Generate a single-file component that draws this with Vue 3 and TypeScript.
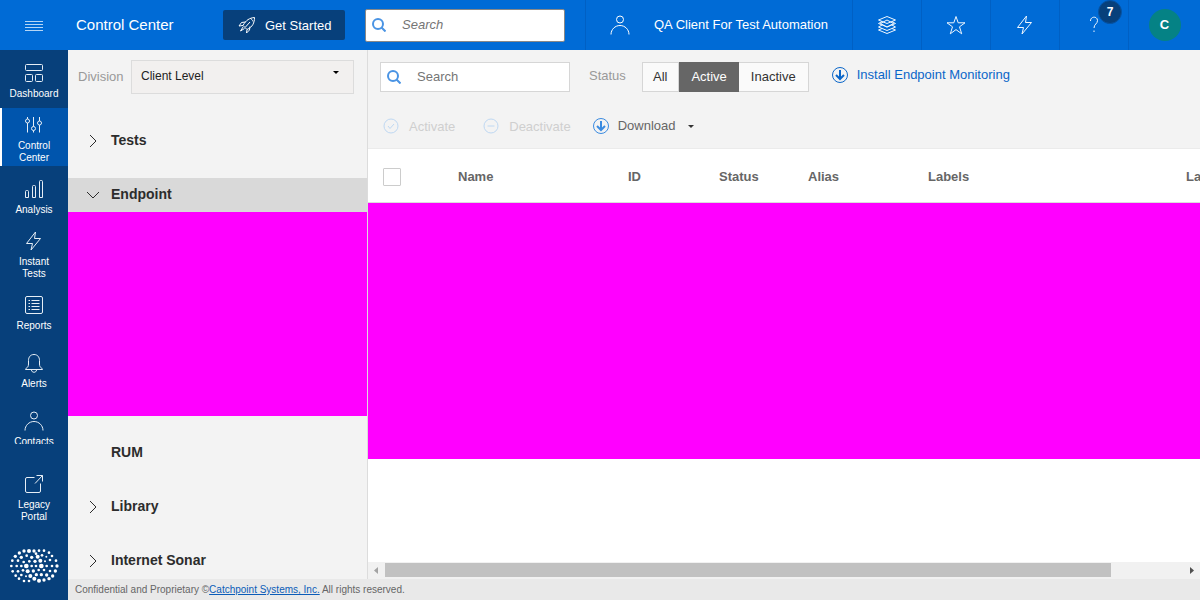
<script setup lang="ts">
import { ref } from 'vue'

interface NavItem { label: string; icon: string; active?: boolean }
interface Section { label: string; kind: 'closed' | 'open' | 'leaf' }
interface Column { label: string; cls: string }

const navItems: NavItem[] = [
  { label: 'Dashboard', icon: 'dashboard' },
  { label: 'Control Center', icon: 'control', active: true },
  { label: 'Analysis', icon: 'analysis' },
  { label: 'Instant Tests', icon: 'bolt' },
  { label: 'Reports', icon: 'reports' },
  { label: 'Alerts', icon: 'bell' },
  { label: 'Contacts', icon: 'person' },
]

const icons: Record<string, string[]> = {
  dashboard: ['M2.5 1.5h15a1 1 0 0 1 1 1v4a1 1 0 0 1-1 1h-15a1 1 0 0 1-1-1v-4a1 1 0 0 1 1-1z', 'M2.5 11.5h5a1 1 0 0 1 1 1v5a1 1 0 0 1-1 1h-5a1 1 0 0 1-1-1v-5a1 1 0 0 1 1-1z', 'M12.5 11.5h5a1 1 0 0 1 1 1v5a1 1 0 0 1-1 1h-5a1 1 0 0 1-1-1v-5a1 1 0 0 1 1-1z'],
  control: ['M3.5 2v2M3.5 8v9.500M9.500 2v9.500M9.500 15.500v2M15.500 2v4M15.500 10v7.500', 'M1.500 6a2 2 0 1 0 4 0a2 2 0 1 0-4 0', 'M7.500 13.500a2 2 0 1 0 4 0a2 2 0 1 0-4 0', 'M13.500 8a2 2 0 1 0 4 0a2 2 0 1 0-4 0'],
  analysis: ['M2.500 11.500h1a1 1 0 0 1 1 1v6h-3v-6a1 1 0 0 1 1-1z', 'M9.500 6.500h1a1 1 0 0 1 1 1v11h-3v-11a1 1 0 0 1 1-1z', 'M16.500 1.500h1a1 1 0 0 1 1 1v16h-3v-16a1 1 0 0 1 1-1z'],
  bolt: ['M11.500 1L2.500 12.500H8.500L7 19L16.500 7.500H10.500L11.500 1z'],
  reports: ['M3 1.500h14a1.500 1.500 0 0 1 1.500 1.500v14a1.500 1.500 0 0 1-1.500 1.500h-14a1.500 1.500 0 0 1-1.500-1.500v-14a1.500 1.500 0 0 1 1.500-1.500z', 'M4.500 5.500h1.500M7.500 5.500h8M4.500 8.500h1.500M7.500 8.500h8M4.500 11.500h1.500M7.500 11.500h8M4.500 14.500h1.500M7.500 14.500h8'],
  bell: ['M1.500 16.500c0-2 3-1 3-5.500V7.500C4.500 4 6.500 1.500 10 1.500s5.500 2.500 5.500 6V11c0 4.500 3 3.500 3 5.500z', 'M7.500 17c0 3 5 3 5 0'],
  person: ['M6.500 4.500a3.500 3.500 0 1 0 7 0a3.500 3.500 0 1 0-7 0', 'M1 19.500c0-5 4-9 9-9s9 4 9 9'],
}

const sections: Section[] = [
  { label: 'Tests', kind: 'closed' },
  { label: 'Endpoint', kind: 'open' },
  { label: 'RUM', kind: 'leaf' },
  { label: 'Library', kind: 'closed' },
  { label: 'Internet Sonar', kind: 'closed' },
]

const columns: Column[] = [
  { label: 'Name', cls: 'c-name' },
  { label: 'ID', cls: 'c-id' },
  { label: 'Status', cls: 'c-status' },
  { label: 'Alias', cls: 'c-alias' },
  { label: 'Labels', cls: 'c-labels' },
  { label: 'Last', cls: 'c-last' },
]

const statuses = ['All', 'Active', 'Inactive']
const status = ref('Active')

const dots: number[][] = [
  [54, 21, 5], [69, 21, 6], [84, 21, 5], [99, 20, 4], [114, 20, 4],
  [40, 27, 5], [129, 26, 4], [28, 37, 5], [46, 40, 5], [62, 35, 4], [77, 40, 5], [90, 29, 4], [95, 38, 6], [108, 34, 4], [121, 38, 3], [138, 36, 4],
  [19, 50, 4], [36, 50, 4], [53, 54, 4], [70, 52, 4], [87, 52, 5], [103, 50, 6], [117, 52, 3], [132, 48, 4], [150, 50, 4],
  [16, 66, 4], [32, 66, 4], [46, 66, 4], [61, 66, 7], [77, 66, 4], [90, 66, 4], [106, 66, 7], [122, 66, 4], [138, 66, 4], [153, 66, 5],
  [20, 82, 4], [36, 82, 4], [51, 79, 4], [65, 82, 6], [82, 81, 5], [98, 78, 4], [114, 78, 4], [132, 81, 4], [148, 81, 5],
  [29, 95, 4], [46, 93, 4], [60, 97, 3], [73, 96, 6], [91, 92, 5], [106, 92, 5], [122, 93, 5], [140, 96, 5],
  [39, 104, 4], [85, 104, 6], [129, 104, 5], [54, 111, 4], [69, 111, 4], [99, 110, 6], [114, 108, 5],
]
</script>

<template>
  <div class="app">
    <header class="topbar">
      <button class="menu" aria-label="Menu">
        <svg width="18" height="12" viewBox="0 0 18 12"><path d="M0 1.500h18M0 4.500h18M0 7.500h18M0 10.500h18" /></svg>
      </button>
      <h1 class="title">Control Center</h1>
      <button class="started">
        <svg width="18" height="18" viewBox="0 0 18 18">
          <path d="M16.500 1.500C11.500 2 8 4 5 9.500l4 4C14.500 11 16.500 7 16.500 1.500zM7.500 6L3.500 6.500 1 10l4-.5M12 10.500l-.5 3.500-3 3 .5-3.500M5 11l-2.500 4 4-2.500M12.500 2.500c1 .5 2 1.500 2.500 3M7.500 11l4.500-5" />
        </svg>
        <span>Get Started</span>
      </button>
      <label class="search top-search">
        <svg width="14" height="14" viewBox="0 0 14 14"><circle cx="6" cy="6" r="5" /><path d="M9.500 9.500L13.500 13.500" /></svg>
        <input type="text" placeholder="Search" aria-label="Search all" />
      </label>
      <button class="client">
        <svg width="20" height="20" viewBox="0 0 20 20"><path v-for="d in icons.person" :key="d" :d="d" /></svg>
        <span>QA Client For Test Automation</span>
      </button>
      <button class="tool" aria-label="Layers">
        <svg width="20" height="20" viewBox="0 0 20 20">
          <path d="M10 1.500l8.500 3.500-8.500 3.500L1.500 5zM5 6.500L1.500 8.500l8.500 3.500 8.500-3.500-3.500-2M5 10L1.500 12l8.500 3.500 8.500-3.500-3.500-2M5 13.500l-3.500 1.500 8.500 3.500 8.500-3.500-3.500-1.500M10 5l6.500 3.500-6.500 3.500-6.500-3.500z" />
        </svg>
      </button>
      <button class="tool" aria-label="Favorites">
        <svg width="20" height="20" viewBox="0 0 20 20"><path d="M10 1.500l2.200 6.300h6.800l-5.500 4 2.200 7-5.700-4.200-5.700 4.200 2.200-7-5.500-4h6.800z" /></svg>
      </button>
      <button class="tool" aria-label="Instant tests">
        <svg width="20" height="20" viewBox="0 0 20 20"><path v-for="d in icons.bolt" :key="d" :d="d" /></svg>
      </button>
      <button class="tool" aria-label="Help">
        <svg width="20" height="20" viewBox="0 0 20 20"><path d="M6.500 6c0-5 7-5 7-.5 0 3.500-3.500 3.500-3.500 7.500M10 15.500v1.500" /></svg>
        <span class="badge">7</span>
      </button>
      <button class="account" aria-label="Account"><span class="avatar">C</span></button>
    </header>

    <div class="body">
      <aside class="rail">
        <nav class="rail-nav">
          <a v-for="n in navItems" :key="n.label" href="#" class="rail-item" :class="{ active: n.active }">
            <svg width="20" height="20" viewBox="0 0 20 20"><path v-for="d in icons[n.icon]" :key="d" :d="d" /></svg>
            <span>{{ n.label }}</span>
          </a>
        </nav>
        <div class="rail-foot">
          <a href="#" class="rail-item">
            <svg width="20" height="20" viewBox="0 0 20 20"><path d="M10.500 3.500H3A1.500 1.500 0 0 0 1.500 5v12A1.500 1.500 0 0 0 3 18.500h12a1.500 1.500 0 0 0 1.500-1.500V9.500M12.500 1.500h6v6M18.500 1.500l-7.500 8" /></svg>
            <span>Legacy Portal</span>
          </a>
          <svg class="logo" width="56" height="48" viewBox="0 0 168 144">
            <circle v-for="(d, i) in dots" :key="i" :cx="d[0]" :cy="d[1]" :r="d[2]" />
          </svg>
        </div>
      </aside>

      <div class="content">
        <div class="panes">
          <section class="tree">
            <div class="division">
              <label for="division">Division</label>
              <div class="select">
                <select id="division"><option>Client Level</option></select>
                <span class="caret"></span>
              </div>
            </div>
            <div class="sections">
              <template v-for="s in sections" :key="s.label">
                <button class="section" :class="s.kind">
                  <span class="chev">
                    <svg v-if="s.kind === 'closed'" width="14" height="14" viewBox="0 0 14 14"><path d="M4 1l6 6-6 6" /></svg>
                    <svg v-else-if="s.kind === 'open'" width="14" height="14" viewBox="0 0 14 14"><path d="M1 4l6 6 6-6" /></svg>
                  </span>
                  <span>{{ s.label }}</span>
                </button>
                <div v-if="s.kind === 'open'" class="subtree"></div>
              </template>
            </div>
          </section>

          <main class="main">
            <div class="toolbar">
              <div class="filters">
                <label class="search list-search">
                  <svg width="14" height="14" viewBox="0 0 14 14"><circle cx="6" cy="6" r="5" /><path d="M9.500 9.500L13.500 13.500" /></svg>
                  <input type="text" placeholder="Search" aria-label="Search list" />
                </label>
                <span class="status-label">Status</span>
                <div class="segments" role="group" aria-label="Status">
                  <button v-for="s in statuses" :key="s" :class="{ on: s === status }" @click="status = s">{{ s }}</button>
                </div>
                <a class="install" href="#">
                  <svg width="18" height="18" viewBox="0 0 18 18"><circle cx="9" cy="9" r="7.500" /><path class="arrow" d="M9 4v9M5 9l4 4 4-4" /></svg>
                  <span>Install Endpoint Monitoring</span>
                </a>
              </div>
              <div class="actions">
                <button class="action" disabled>
                  <svg width="16" height="16" viewBox="0 0 16 16"><circle cx="8" cy="8" r="7" /><path d="M5 8l2 2.500L11 6" /></svg>
                  <span>Activate</span>
                </button>
                <button class="action" disabled>
                  <svg width="16" height="16" viewBox="0 0 16 16"><circle cx="8" cy="8" r="7" /><path d="M4.500 8h7" /></svg>
                  <span>Deactivate</span>
                </button>
                <button class="action download">
                  <svg width="18" height="18" viewBox="0 0 18 18"><circle cx="9" cy="9" r="7.500" /><path class="arrow" d="M9 4v9M5 9l4 4 4-4" /></svg>
                  <span>Download</span>
                  <span class="caret"></span>
                </button>
              </div>
            </div>
            <div class="grid">
              <table>
                <thead>
                  <tr>
                    <th class="c-check"><input type="checkbox" aria-label="Select all" /></th>
                    <th v-for="c in columns" :key="c.label" :class="c.cls">{{ c.label }}</th>
                  </tr>
                </thead>
                <tbody><tr><td colspan="7" class="rows"></td></tr></tbody>
              </table>
            </div>
            <div class="hscroll">
              <svg width="17" height="17" viewBox="0 0 17 17"><path d="M10 5v7L6 8.500z" fill="#a3a3a3" /></svg>
              <div class="track"><div class="thumb"></div></div>
              <svg width="17" height="17" viewBox="0 0 17 17"><path d="M7 5v7l4-3.500z" fill="#505050" /></svg>
            </div>
          </main>
        </div>
        <footer class="footer">
          Confidential and Proprietary ©<a href="#">Catchpoint Systems, Inc.</a> All rights reserved.
        </footer>
      </div>
    </div>
  </div>
</template>

<style>
body { overflow: hidden; }
</style>

<style scoped>
.app, .app * { box-sizing: border-box; }
.app {
  display: flex;
  flex-direction: column;
  height: 100vh;
  font-family: "Liberation Sans", Arial, sans-serif;
  font-size: 13px;
  background: #fff;
}
button, input, select { font: inherit; margin: 0; }
button { border: 0; background: none; padding: 0; cursor: pointer; }
svg { fill: none; stroke: currentColor; flex: none; display: block; }

.topbar {
  display: flex;
  align-items: stretch;
  flex: none;
  height: 50px;
  background: #006bd6;
  color: #fff;
}
.menu { width: 68px; display: flex; align-items: center; justify-content: center; padding-top: 2px; color: #b5d6f6; }
.title { width: 155px; margin: 0; padding-left: 8px; font-size: 15px; font-weight: 400; line-height: 50px; white-space: nowrap; }
.started {
  width: 122px;
  height: 30px;
  margin: 10px 20px 0 0;
  padding-left: 15px;
  display: flex;
  align-items: center;
  gap: 9px;
  border-radius: 2px;
  background: #07407b;
  color: #fff;
  white-space: nowrap;
}
.search { display: flex; align-items: center; background: #fff; color: #4a94e4; }
.search svg { stroke-width: 2; }
.search input { flex: 1; min-width: 0; border: 0; outline: 0; background: none; color: #444; }
.search input::placeholder { color: #757575; opacity: 1; }
.top-search { width: 200px; height: 33px; margin-top: 9px; padding: 0 0 2px 6px; gap: 14px; border: 1px solid #888; border-radius: 2px; }
.top-search input { font-style: italic; padding: 0 2px 1px; }
.client {
  flex: 1;
  margin-left: 20px;
  padding-left: 24px;
  display: flex;
  align-items: center;
  gap: 24px;
  border-left: 1px solid #0060c4;
  color: #fff;
  white-space: nowrap;
}
.client span { padding-bottom: 1px; }
.tool { position: relative; width: 69px; display: flex; align-items: center; justify-content: center; border-left: 1px solid #0060c4; color: #f0f7fe; }
.badge {
  position: absolute;
  top: 0;
  right: 6px;
  width: 24px;
  height: 24px;
  border-radius: 50%;
  background: #07407b;
  border: 1px solid #0553a5;
  color: #fff;
  font-size: 12px;
  font-weight: 700;
  line-height: 22px;
}
.account { width: 72px; border-left: 1px solid #0060c4; display: flex; align-items: center; justify-content: center; }
.avatar { width: 32px; height: 32px; border-radius: 50%; background: #058285; color: #fff; font-weight: 700; line-height: 32px; }

.body { flex: 1; display: flex; min-height: 0; }
.rail { width: 68px; flex: none; display: flex; flex-direction: column; background: #07407b; }
.rail-nav { flex: 1; min-height: 0; overflow: hidden; }
.rail-item {
  height: 58px;
  padding: 5px 8px 0;
  display: flex;
  flex-direction: column;
  align-items: center;
  justify-content: center;
  gap: 5px;
  color: #fff;
  font-size: 10px;
  line-height: 12px;
  text-align: center;
  text-decoration: none;
}
.rail-item svg { color: #e6eef6; }
.rail-item.active { background: #0055ad; box-shadow: inset 2px 0 #fff; }
.rail-foot { flex: none; padding: 23px 0 8px; }
.logo { margin: 19px 6px 0; }
.logo circle { fill: #fff; stroke: none; }

.content { flex: 1; min-width: 0; display: flex; flex-direction: column; }
.panes { flex: 1; display: flex; min-height: 0; }
.tree { width: 300px; flex: none; background: #f3f3f3; border-right: 1px solid #dcdcdc; overflow: hidden; }
.division { height: 74px; padding: 10px 13px 0 10px; display: flex; align-items: flex-start; gap: 8px; }
.division label { width: 45px; color: #999; line-height: 33px; }
.select { position: relative; flex: 1; }
.select select {
  display: block;
  width: 100%;
  height: 34px;
  padding: 0 9px 3px;
  appearance: none;
  border: 1px solid #dcdcdc;
  border-radius: 0;
  background: #f2f0ef;
  color: #222;
  font-size: 12px;
}
.caret { border: 3px solid transparent; border-top-color: currentColor; border-bottom: 0; }
.select .caret { position: absolute; top: 11px; right: 15px; pointer-events: none; color: #000; }
.section { width: 100%; height: 34px; padding: 0 0 2px 18px; display: flex; align-items: center; gap: 11px; color: #2c2c2c; font-size: 14px; font-weight: 700; }
.section + .section, .subtree + .section { margin-top: 20px; }
.section.open { background: #d9d9d9; }
.chev { width: 14px; height: 14px; padding-top: 1px; }
.subtree { height: 204px; background: #f0f; }

.main { flex: 1; min-width: 0; display: flex; flex-direction: column; background: #fff; }
.toolbar { flex: none; height: 99px; padding: 12px 12px 0; background: #f3f3f3; border-bottom: 1px solid #ebebeb; }
.filters { display: flex; height: 30px; white-space: nowrap; }
.list-search { width: 190px; padding-left: 6px; gap: 13px; border: 1px solid #d6d6d6; }
.list-search input { padding: 0 3px 2px; }
.status-label { width: 53px; margin-left: 19px; color: #999; line-height: 28px; }
.segments { display: flex; margin-right: 22px; }
.segments button { padding: 0 12px 2px; border: 1px solid #d6d6d6; background: #fafafa; color: #333; }
.segments button:first-child { padding: 0 11px 2px 10px; }
.segments button + button { border-left: 0; }
.segments button.on { padding: 0 11px 2px 12px; border-color: #666; background: #666; color: #fff; }
.install { display: flex; gap: 8px; color: #0a66c9; text-decoration: none; line-height: 26px; }
.install svg { margin-top: 4px; }
.arrow { stroke-width: 2; }
.actions { display: flex; align-items: center; height: 24px; margin-top: 22px; padding-left: 3px; }
.action { display: flex; align-items: center; gap: 10px; margin-right: 28px; color: #cfcfcf; }
.action svg { color: #bfd8f2; }
.download { gap: 8px; margin-left: -7px; color: #666; }
.download svg { color: #3b8be0; }
.download span { padding-bottom: 2px; }
.download .caret { padding: 0; margin-left: 4px; color: #333; }
.grid { flex: 1; min-height: 0; overflow: hidden; }
table { width: 968px; table-layout: fixed; border-collapse: separate; border-spacing: 0; }
th { height: 54px; padding: 2px 0 0; border-bottom: 1px solid #ddd; color: #666; text-align: left; font-weight: 700; }
.c-check { width: 90px; padding-left: 15px; }
.c-check input { display: block; width: 18px; height: 18px; appearance: none; border: 1px solid #ccc; border-radius: 1px; background: #fff; }
.c-name { width: 170px; }
.c-id { width: 91px; }
.c-status { width: 89px; }
.c-alias { width: 120px; }
.c-labels { width: 258px; }
.rows { height: 256px; padding: 0; background: #f0f; }
.hscroll { flex: none; display: flex; height: 17px; background: #f1f1f1; }
.hscroll svg { stroke: none; }
.track { flex: 1; padding: 1px 0 2px; }
.thumb { width: 91%; height: 14px; background: #c1c1c1; }
.footer { flex: none; height: 21px; padding-left: 7px; background: #e9e9e9; color: #666; font-size: 10px; line-height: 21px; }
.footer a { color: #0a5cb8; }
</style>
